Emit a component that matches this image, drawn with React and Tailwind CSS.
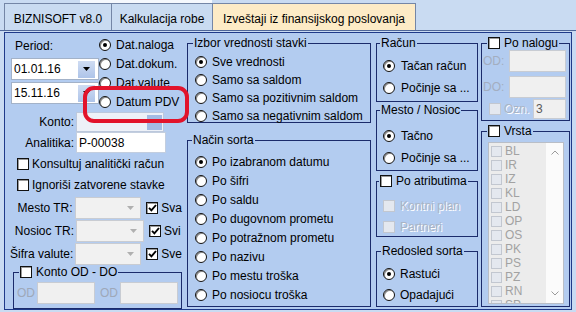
import React from "react";

function Radio({ checked }) {
  return (
    <span className="flex h-[12px] w-[12px] shrink-0 items-center justify-center rounded-full border border-[#111] bg-white shadow-[inset_1px_1px_0_#8c8c8c]">
      {checked && <span className="h-[4px] w-[4px] rounded-full bg-black" />}
    </span>
  );
}

function Check({ checked, disabled, small }) {
  const size = small ? "h-[11px] w-[11px]" : "h-[12px] w-[12px]";
  const look = disabled
    ? "border-[#c2c7d0] bg-[#e4e8ef]"
    : "border-[#111] bg-white shadow-[inset_1px_1px_0_#9a9a9a]";
  return (
    <span className={`flex ${size} shrink-0 items-center justify-center border ${look}`}>
      {checked && (
        <svg width="9" height="8" viewBox="0 0 9 8">
          <path d="M1 3.8l2.4 2.6L8 1" stroke="#000" strokeWidth="1.9" fill="none" />
        </svg>
      )}
    </span>
  );
}

function RadioRow({ checked, children, h, gap = "gap-[5px]" }) {
  return (
    <div className={`flex ${h} items-center ${gap} whitespace-nowrap`}>
      <Radio checked={checked} />
      <span>{children}</span>
    </div>
  );
}

function Group({ legend, check, ml = "ml-[5px]", gap = "gap-[4px]", className = "", children }) {
  return (
    <fieldset className={`border border-[#1b2b6b] ${className}`}>
      <legend className={`${ml} px-[1px]`}>
        <span className={`flex h-[14px] items-center ${gap} whitespace-nowrap leading-[14px]`}>
          {check && <Check />}
          <span>{legend}</span>
        </span>
      </legend>
      {children}
    </fieldset>
  );
}

function Tab({ w, active, children }) {
  return (
    <div
      className={`flex ${w} items-center justify-center border-l border-t border-[#7486a6] pt-[3px] whitespace-nowrap ${
        active ? "border-r bg-[#fdebc6]" : "bg-[#c9dbf1]"
      }`}
    >
      {children}
    </div>
  );
}

function DownTri({ color = "#000" }) {
  return (
    <svg width="7" height="4" viewBox="0 0 7 4">
      <path d="M0 0h7L3.5 4z" fill={color} />
    </svg>
  );
}

function DateBox({ value, className }) {
  return (
    <div className={`ml-[1px] flex h-[22px] w-[88px] items-center border border-[#a3b2c8] bg-white pl-[2px] pr-[3px] ${className}`}>
      <span className="flex-1">{value}</span>
      <span className="flex h-[17px] w-[17px] items-center justify-center bg-gradient-to-b from-[#cfdcf2] to-[#aec4e9]">
        <DownTri />
      </span>
    </div>
  );
}

function ComboRow({ label, check, className = "" }) {
  return (
    <div className={`flex h-[22px] items-center ${className}`}>
      <span className="w-[64px] whitespace-nowrap text-right">{label}</span>
      <div className="ml-[2px] flex h-[22px] w-[68px] items-center justify-end border border-[#c9ccd2] bg-[#f1f1f1] pr-[6px]">
        <DownTri color="#b0b0b0" />
      </div>
      <div className="ml-[5px] flex items-center gap-[3px]">
        <Check checked />
        <span>{check}</span>
      </div>
    </div>
  );
}

function DisabledInput({ w, value }) {
  return (
    <div className={`flex h-[22px] ${w} items-center border border-[#c8ccd3] bg-[#f0f0f0] pl-[2px] text-[#6a6a6a]`}>
      {value}
    </div>
  );
}

const emboss = "text-[#a9b4c6] [text-shadow:1px_1px_0_#ffffff]";

export default function App() {
  const vrsta = ["BL", "IR", "IZ", "KL", "LD", "OP", "OS", "PK", "PS", "PZ", "RN", "SP"];
  return (
    <div className="relative h-[312px] w-[576px] overflow-hidden bg-[#c9dbf2] font-['Liberation_Sans',Arial,sans-serif] text-[12px] leading-[14px] text-black">
      <div className="flex h-[3px]">
        <div className="ml-[80px] w-[132px] bg-[#f5f8fd]" />
      </div>
      <div className="flex h-[28px] border-b border-[#4f679a] pl-[4px]">
        <Tab w="w-[107px]">BIZNISOFT v8.0</Tab>
        <Tab w="w-[101px]">Kalkulacija robe</Tab>
        <Tab w="w-[204px]" active>
          Izveštaji iz finansijskog poslovanja
        </Tab>
      </div>

      <div className="ml-[4px] mt-[1px] flex h-[278px] w-[568px] items-start border border-[#1f3a8a] bg-[#b3ccf0]">
        {/* Column A */}
        <div className="ml-[5px] flex w-[172px] flex-col">
          <div className="mt-[2px] flex">
            <div className="flex w-[89px] flex-col">
              <div className="mt-[2px] flex h-[18px] items-center pl-[5px]">Period:</div>
              <DateBox value="01.01.16" className="mt-[3px]" />
              <DateBox value="15.11.16" className="mt-[2px]" />
            </div>
            <div className="flex flex-col">
              <RadioRow h="h-[19px]" checked>Dat.naloga</RadioRow>
              <RadioRow h="h-[19px]">Dat.dokum.</RadioRow>
              <RadioRow h="h-[19px]">Dat.valute</RadioRow>
              <RadioRow h="h-[19px]">Datum PDV</RadioRow>
            </div>
          </div>

          <div className="mt-[1px] flex h-[20px] items-center">
            <span className="w-[64px] text-right">Konto:</span>
            <div className="ml-[2px] flex h-[20px] w-[88px] items-center justify-end border border-[#bcc8dc] bg-[#edf1f8] pr-[1px]">
              <div className="h-[15px] w-[15px] bg-[#a3bbe4]" />
            </div>
          </div>
          <div className="flex h-[21px] items-center">
            <span className="w-[64px] text-right">Analitika:</span>
            <div className="ml-[2px] flex h-[21px] w-[90px] items-center border border-[#c3cedf] bg-white pl-[2px]">
              P-00038
            </div>
          </div>
          <div className="flex h-[21px] items-center gap-[3px] pl-[7px] whitespace-nowrap">
            <Check />
            <span>Konsultuj analitički račun</span>
          </div>
          <div className="flex h-[21px] items-center gap-[3px] pl-[7px] whitespace-nowrap">
            <Check />
            <span>Ignoriši zatvorene stavke</span>
          </div>
          <ComboRow label="Mesto TR:" check="Sva" className="mt-[2px]" />
          <ComboRow label="Nosioc TR:" check="Svi" className="mt-[1px]" />
          <ComboRow label="Šifra valute:" check="Sve" className="mt-[1px]" />

          <Group legend="Konto OD - DO" check className="ml-[3px] h-[44px] w-[169px]">
            <div className="mt-[3px] flex items-center pl-[3px] text-[#9ea8b9]">
              <span className="w-[20px]">OD</span>
              <DisabledInput w="w-[58px]" />
              <span className="ml-[5px] w-[20px]">OD</span>
              <DisabledInput w="w-[58px]" />
            </div>
          </Group>
        </div>

        {/* Column B */}
        <div className="ml-[5px] flex w-[184px] flex-col">
          <Group legend="Izbor vrednosti stavki" className="mt-[3px] h-[87px]">
            <div className="flex flex-col pl-[7px] pt-[3px]">
              <RadioRow h="h-[18px]" checked>Sve vrednosti</RadioRow>
              <RadioRow h="h-[18px]">Samo sa saldom</RadioRow>
              <RadioRow h="h-[18px]">Samo sa pozitivnim saldom</RadioRow>
              <RadioRow h="h-[18px]">Samo sa negativnim saldom</RadioRow>
            </div>
          </Group>
          <Group legend="Način sorta" ml="ml-[4px]" className="mt-[10px] h-[174px]">
            <div className="flex flex-col pl-[7px] pt-[5px]">
              <RadioRow h="h-[19px]" checked>Po izabranom datumu</RadioRow>
              <RadioRow h="h-[19px]">Po šifri</RadioRow>
              <RadioRow h="h-[19px]">Po saldu</RadioRow>
              <RadioRow h="h-[19px]">Po dugovnom prometu</RadioRow>
              <RadioRow h="h-[19px]">Po potražnom prometu</RadioRow>
              <RadioRow h="h-[19px]">Po nazivu</RadioRow>
              <RadioRow h="h-[19px]">Po mestu troška</RadioRow>
              <RadioRow h="h-[19px]">Po nosiocu troška</RadioRow>
            </div>
          </Group>
        </div>

        {/* Column C */}
        <div className="ml-[5px] flex w-[102px] flex-col">
          <Group legend="Račun" ml="ml-[3px]" className="mt-[3px] h-[66px]">
            <div className="flex flex-col pl-[6px] pt-[5px]">
              <RadioRow h="h-[22px]" gap="gap-[6px]" checked>Tačan račun</RadioRow>
              <RadioRow h="h-[22px]" gap="gap-[6px]">Počinje sa ...</RadioRow>
            </div>
          </Group>
          <Group legend="Mesto / Nosioc" ml="ml-[3px]" className="mt-[1px] h-[68px]">
            <div className="flex flex-col pl-[6px] pt-[8px]">
              <RadioRow h="h-[22px]" gap="gap-[6px]" checked>Tačno</RadioRow>
              <RadioRow h="h-[22px]" gap="gap-[6px]">Počinje sa ...</RadioRow>
            </div>
          </Group>
          <Group legend="Po atributima" check ml="ml-[2px]" className="mt-[3px] h-[63px]">
            <div className="flex flex-col pl-[6px] pt-[7px]">
              <div className="flex h-[21px] items-center gap-[5px] whitespace-nowrap">
                <Check disabled />
                <span className={emboss}>Kontni plan</span>
              </div>
              <div className="flex h-[21px] items-center gap-[5px] whitespace-nowrap">
                <Check disabled />
                <span className={emboss}>Partneri</span>
              </div>
            </div>
          </Group>
          <Group legend="Redosled sorta" ml="ml-[4px]" className="mt-[7px] h-[63px]">
            <div className="flex flex-col pl-[6px] pt-[5px]">
              <RadioRow h="h-[21px]" checked>Rastući</RadioRow>
              <RadioRow h="h-[21px]">Opadajući</RadioRow>
            </div>
          </Group>
        </div>

        {/* Column D */}
        <div className="ml-[3px] flex w-[89px] flex-col">
          <Group legend="Po nalogu" check className="mt-[3px] h-[85px]">
            <div className="flex flex-col">
              <div className="flex items-center pl-[1px] pr-[3px]">
                <span className="text-[#a3aec0]">OD:</span>
                <div className="ml-auto">
                  <DisabledInput w="w-[57px]" />
                </div>
              </div>
              <div className="mt-[4px] flex items-center pl-[1px] pr-[3px]">
                <span className="text-[#a3aec0]">DO:</span>
                <div className="ml-auto">
                  <DisabledInput w="w-[57px]" />
                </div>
              </div>
              <div className="mt-[1px] flex h-[20px] items-center pl-[7px] pr-[3px]">
                <Check disabled />
                <span className={`ml-[3px] ${emboss}`}>Ozn.</span>
                <div className="ml-auto flex h-[20px] w-[33px] items-center border border-[#c8ccd3] bg-[#f0f0f0] pl-[2px] text-[#5a5a5a]">
                  3
                </div>
              </div>
            </div>
          </Group>
          <Group legend="Vrsta" check className="mt-[3px] h-[183px]">
            <div className="ml-[6px] mt-[4px] flex h-[162px] w-[76px] overflow-hidden border border-[#b9bec7] bg-[#ececec]">
              <div className="flex flex-1 flex-col pl-[2px] pt-[1px]">
                {vrsta.map((v) => (
                  <div key={v} className="flex h-[14px] shrink-0 items-center gap-[3px] text-[#a2a2a2]">
                    <Check disabled small />
                    <span>{v}</span>
                  </div>
                ))}
              </div>
              <div className="flex w-[17px] flex-col items-center justify-between bg-[#fbfbfb] pb-[7px] pt-[7px]">
                <svg width="8" height="5" viewBox="0 0 8 5">
                  <path d="M0.5 4.5L4 1l3.5 3.5" stroke="#9a9a9a" fill="none" />
                </svg>
                <svg width="8" height="5" viewBox="0 0 8 5">
                  <path d="M0.5 0.5L4 4l3.5-3.5" stroke="#9a9a9a" fill="none" />
                </svg>
              </div>
            </div>
          </Group>
        </div>
      </div>

      <div className="pointer-events-none absolute left-[83px] top-[86px] z-10 h-[37px] w-[106px] rounded-[11px] border-4 border-[#e2132b]" />
    </div>
  );
}
